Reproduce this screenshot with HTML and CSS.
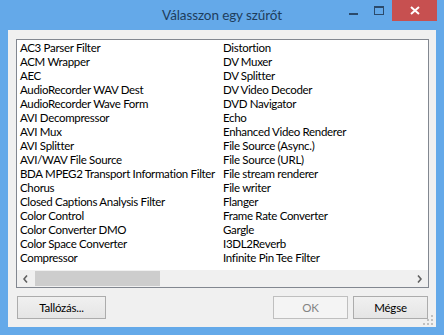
FILE: index.html
```html
<!DOCTYPE html>
<html lang="hu">
<head>
    <meta charset="UTF-8">
    <title>Válasszon egy szűrőt</title>
    <link rel="stylesheet" href="styles.css">
</head>
<body>
    <div class="window">
        <div class="titlebar">
            <div></div>
            <div class="title">Válasszon egy szűrőt</div>
            <div class="controls">
                <span class="ctl minimize"><svg width="9" height="2"><rect width="9" height="2" fill="#2b4a6b"/></svg></span>
                <span class="ctl maximize"><svg width="10" height="9"><rect x="0.5" y="0.5" width="9" height="8" fill="none" stroke="#2b4a6b"/><rect x="0" y="0" width="10" height="2" fill="#2b4a6b"/></svg></span>
                <span class="ctl close"><svg width="10" height="9"><path d="M1 1 L9 8 M9 1 L1 8" stroke="#fff" stroke-width="2"/></svg></span>
            </div>
        </div>
        <div class="client">
            <div class="listbox">
                <div class="items">
                    <div class="col">
                        <div class="item">AC3 Parser Filter</div>
                        <div class="item">ACM Wrapper</div>
                        <div class="item">AEC</div>
                        <div class="item">AudioRecorder WAV Dest</div>
                        <div class="item">AudioRecorder Wave Form</div>
                        <div class="item">AVI Decompressor</div>
                        <div class="item">AVI Mux</div>
                        <div class="item">AVI Splitter</div>
                        <div class="item">AVI/WAV File Source</div>
                        <div class="item">BDA MPEG2 Transport Information Filter</div>
                        <div class="item">Chorus</div>
                        <div class="item">Closed Captions Analysis Filter</div>
                        <div class="item">Color Control</div>
                        <div class="item">Color Converter DMO</div>
                        <div class="item">Color Space Converter</div>
                        <div class="item">Compressor</div>
                    </div>
                    <div class="col">
                        <div class="item">Distortion</div>
                        <div class="item">DV Muxer</div>
                        <div class="item">DV Splitter</div>
                        <div class="item">DV Video Decoder</div>
                        <div class="item">DVD Navigator</div>
                        <div class="item">Echo</div>
                        <div class="item">Enhanced Video Renderer</div>
                        <div class="item">File Source (Async.)</div>
                        <div class="item">File Source (URL)</div>
                        <div class="item">File stream renderer</div>
                        <div class="item">File writer</div>
                        <div class="item">Flanger</div>
                        <div class="item">Frame Rate Converter</div>
                        <div class="item">Gargle</div>
                        <div class="item">I3DL2Reverb</div>
                        <div class="item">Infinite Pin Tee Filter</div>
                    </div>
                </div>
                <div class="hscroll">
                    <span class="arrow"><svg width="5" height="8"><path d="M4 0.5 L1 4 L4 7.5" fill="none" stroke="#606060" stroke-width="1.6"/></svg></span>
                    <div class="track"><div class="thumb"></div></div>
                    <span class="arrow"><svg width="5" height="8"><path d="M1 0.5 L4 4 L1 7.5" fill="none" stroke="#606060" stroke-width="1.6"/></svg></span>
                </div>
            </div>
            <div class="buttons">
                <button class="btn browse">Tallózás...</button>
                <span class="spacer"></span>
                <button class="btn" disabled>OK</button>
                <button class="btn">Mégse</button>
            </div>
            <svg class="grip" width="10" height="10">
                <rect x="8" y="0" width="2" height="2" fill="#c0c0c0"/>
                <rect x="4" y="4" width="2" height="2" fill="#c0c0c0"/>
                <rect x="8" y="4" width="2" height="2" fill="#c0c0c0"/>
                <rect x="0" y="8" width="2" height="2" fill="#c0c0c0"/>
                <rect x="4" y="8" width="2" height="2" fill="#c0c0c0"/>
                <rect x="8" y="8" width="2" height="2" fill="#c0c0c0"/>
            </svg>
        </div>
    </div>
</body>
</html>
```

FILE: styles.css
```css
body {
    margin: 0;
    font-family: Lato, "Noto Sans", sans-serif;
}

.window {
    width: 444px;
    height: 335px;
    box-sizing: border-box;
    background-color: #64a9e9;
    display: flex;
    flex-direction: column;
}

.titlebar {
    height: 30px;
    display: grid;
    grid-template-columns: 1fr auto 1fr;
    align-items: start;
}

.title {
    font-size: 13.5px;
    letter-spacing: -0.1px;
    color: #1e3d5c;
    line-height: 30px;
}

.controls {
    justify-self: end;
    display: flex;
    margin-right: 7px;
}

.ctl {
    height: 21px;
    display: flex;
    align-items: center;
    justify-content: center;
}

.minimize {
    width: 26px;
    align-items: flex-end;
    padding-bottom: 6px;
    box-sizing: border-box;
}

.maximize {
    width: 26px;
}

.close {
    width: 45px;
    background-color: #c75050;
}

.client {
    position: relative;
    flex: 1;
    margin: 0 8px 8px;
    background-color: #f0f0f0;
    padding: 9px 7px 0 8px;
    display: flex;
    flex-direction: column;
}

.listbox {
    height: 249px;
    box-sizing: border-box;
    border: 1px solid #828790;
    background-color: #fff;
    display: flex;
    flex-direction: column;
}

.items {
    flex: 1;
    display: flex;
    padding: 1px 0 0 3px;
    overflow: hidden;
}

.col {
    width: 203px;
    flex-shrink: 0;
}

.item {
    font-size: 11.5px;
    letter-spacing: -0.32px;
    line-height: 14px;
    height: 14px;
    color: #000;
    white-space: nowrap;
}

.hscroll {
    height: 17px;
    display: flex;
    background-color: #f0f0f0;
}

.arrow {
    width: 17px;
    display: flex;
    align-items: center;
    justify-content: center;
}

.track {
    flex: 1;
    padding: 1px 0;
}

.thumb {
    width: 125px;
    height: 15px;
    margin-left: 1px;
    background-color: #cdcdcd;
}

.buttons {
    display: flex;
    gap: 5px;
    margin-top: 8px;
    padding: 0 1px;
}

.spacer {
    flex: 1;
}

.btn {
    width: 75px;
    height: 23px;
    font-family: inherit;
    font-size: 11.5px;
    letter-spacing: -0.22px;
    color: #000;
    border: 1px solid #acacac;
    background: linear-gradient(#f0f0f0, #e5e5e5);
    padding: 0;
}

.btn.browse {
    width: 89px;
}

.btn:disabled {
    border-color: #bfbfbf;
    background: #f4f4f4;
    color: #838383;
}

.grip {
    position: absolute;
    right: 3px;
    bottom: 2px;
}
```
